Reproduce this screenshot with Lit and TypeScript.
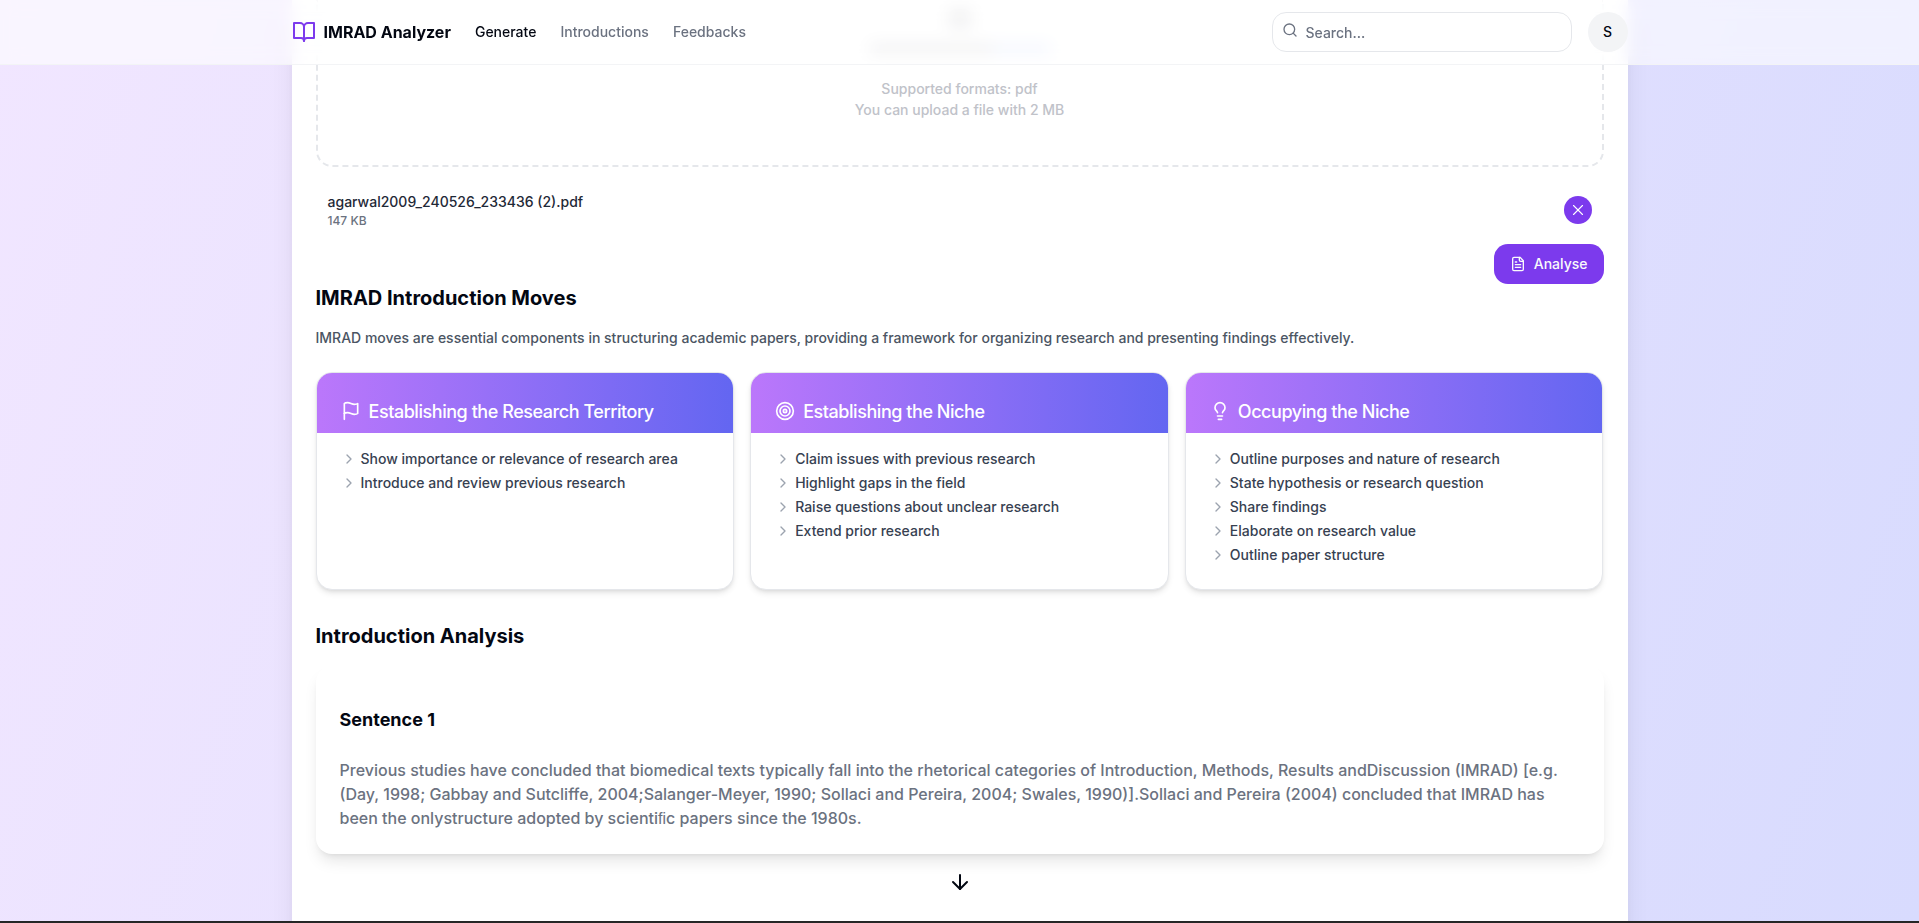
import { LitElement, html, css, svg, nothing } from "lit";
import { customElement, property } from "lit/decorators.js";

const ICONS: Record<string, unknown> = {
  book: svg`<path d="M2 3h6a4 4 0 0 1 4 4v14a3 3 0 0 0-3-3H2z"/><path d="M22 3h-6a4 4 0 0 0-4 4v14a3 3 0 0 1 3-3h7z"/>`,
  search: svg`<circle cx="11" cy="11" r="8"/><path d="m21 21-4.3-4.3"/>`,
  close: svg`<path d="M18 6 6 18"/><path d="m6 6 12 12"/>`,
  file: svg`<path d="M15 2H6a2 2 0 0 0-2 2v16a2 2 0 0 0 2 2h12a2 2 0 0 0 2-2V7Z"/><path d="M14 2v4a2 2 0 0 0 2 2h4"/><path d="M10 9H8"/><path d="M16 13H8"/><path d="M16 17H8"/>`,
  flag: svg`<path d="M4 15s1-1 4-1 5 2 8 2 4-1 4-1V3s-1 1-4 1-5-2-8-2-4 1-4 1z"/><path d="M4 22v-7"/>`,
  target: svg`<circle cx="12" cy="12" r="10"/><circle cx="12" cy="12" r="6"/><circle cx="12" cy="12" r="2"/>`,
  bulb: svg`<path d="M15 14c.2-1 .7-1.7 1.5-2.5 1-.9 1.5-2.2 1.5-3.5A6 6 0 0 0 6 8c0 1 .2 2.2 1.5 3.5.7.7 1.3 1.5 1.5 2.5"/><path d="M9 18h6"/><path d="M10 22h4"/>`,
  chevron: svg`<path d="m9 18 6-6-6-6"/>`,
  down: svg`<path d="M12 5v14"/><path d="m19 12-7 7-7-7"/>`,
};

@customElement("line-icon")
export class LineIcon extends LitElement {
  @property() name = "";

  static styles = css`
    :host { display: block; flex: none; width: 24px; height: 24px; }
    .glyph {
      display: block; width: 100%; height: 100%;
      fill: none; stroke: currentColor; stroke-width: var(--icon-stroke, 2);
      stroke-linecap: round; stroke-linejoin: round;
    }
  `;

  render() {
    return html`<svg class="glyph" viewBox="0 0 24 24" aria-hidden="true">${ICONS[this.name] ?? nothing}</svg>`;
  }
}

@customElement("move-card")
export class MoveCard extends LitElement {
  @property() icon = "";
  @property() heading = "";
  @property({ attribute: false }) items: string[] = [];

  static styles = css`
    :host {
      display: block; overflow: hidden; box-sizing: border-box;
      border: 1px solid #e5e7eb; border-radius: 16px; background: #fff;
      box-shadow: 0 4px 6px -1px rgb(0 0 0 / 0.1), 0 2px 4px -2px rgb(0 0 0 / 0.1);
    }
    .head {
      display: flex; align-items: center; gap: 8px;
      padding: 24px 24px 8px; color: #fff;
      background: linear-gradient(to right, #bb77fb, #6366f1);
    }
    .symbol { width: 20px; height: 20px; }
    .title {
      margin: 0; padding-top: 2px; font-optical-sizing: auto;
      font-size: 18px; line-height: 26px; font-weight: 500; letter-spacing: -0.025em;
    }
    .list { margin: 0; padding: 16px 24px 20px; list-style: none; }
    .item {
      display: flex; align-items: flex-start; gap: 4px;
      padding-bottom: 4px; font-size: 14px; line-height: 20px; color: #374151;
    }
    .arrow { width: 16px; height: 16px; margin-top: 2px; color: #9ca3af; }
  `;

  render() {
    return html`
      <header class="head">
        <line-icon class="symbol" name=${this.icon}></line-icon>
        <h3 class="title">${this.heading}</h3>
      </header>
      <ul class="list">
        ${this.items.map((t) => html`<li class="item"><line-icon class="arrow" name="chevron"></line-icon><span>${t}</span></li>`)}
      </ul>
    `;
  }
}

const MOVES = [
  {
    icon: "flag",
    heading: "Establishing the Research Territory",
    items: ["Show importance or relevance of research area", "Introduce and review previous research"],
  },
  {
    icon: "target",
    heading: "Establishing the Niche",
    items: [
      "Claim issues with previous research",
      "Highlight gaps in the field",
      "Raise questions about unclear research",
      "Extend prior research",
    ],
  },
  {
    icon: "bulb",
    heading: "Occupying the Niche",
    items: [
      "Outline purposes and nature of research",
      "State hypothesis or research question",
      "Share findings",
      "Elaborate on research value",
      "Outline paper structure",
    ],
  },
];

@customElement("app-root")
export class AppRoot extends LitElement {
  static styles = css`
    :host {
      display: flex; flex-direction: column; box-sizing: border-box;
      height: 100vh; overflow: hidden;
      border-bottom: 2px solid #262626;
      background: linear-gradient(108deg, #f1e6ff, #d8dbfe);
      color: #030712;
      font-family: Inter, "Liberation Sans", sans-serif;
      font-size: 14px; line-height: 20px; font-weight: 500;
    }
    .bar {
      position: sticky; top: 0; z-index: 2; flex: none;
      border-bottom: 1px solid #f3f4f6;
      background: rgb(255 255 255 / 0.6);
      backdrop-filter: blur(8px);
    }
    .bar-inner, .sheet { width: 100%; max-width: 1336px; margin: 0 auto; box-sizing: border-box; }
    .bar-inner { display: flex; align-items: center; justify-content: space-between; height: 64px; }
    .nav { display: flex; align-items: center; gap: 24px; }
    .brand { display: flex; align-items: center; gap: 8px; font-size: 16px; font-weight: 700; color: inherit; text-decoration: none; }
    .logo { color: #7c3aed; }
    .link { color: #6b7280; text-decoration: none; }
    .link.current { color: #030712; }
    .tools { display: flex; align-items: center; gap: 16px; }
    .search {
      display: flex; align-items: flex-start; box-sizing: border-box;
      width: 300px; height: 40px; padding: 0 12px 0 9px; gap: 8px;
      border: 1px solid #e5e7eb; border-radius: 14px; background: #fff;
    }
    .search-icon { width: 16px; height: 16px; margin-top: 9px; color: #6b7280; }
    .field {
      flex: 1; min-width: 0; height: 38px; padding: 0; border: 0; outline: 0;
      background: none; font: inherit; color: inherit;
    }
    .field::placeholder { color: #6b7280; opacity: 1; }
    .avatar {
      width: 40px; height: 40px; padding: 0; border: 0; border-radius: 50%;
      background: #f3f4f6; color: inherit; font: inherit;
    }
    .sheet {
      flex: none; margin-top: -65px; padding: 0 24px 24px; background: #fff;
      box-shadow: 0 20px 25px -5px rgb(0 0 0 / 0.1), 0 8px 10px -6px rgb(0 0 0 / 0.1);
    }
    .drop {
      display: flex; flex-direction: column; align-items: center; box-sizing: border-box;
      padding: 9px 24px 45px; border: 2px dashed #e5e7eb; border-top: 0;
      border-radius: 0 0 16px 16px; color: #9ca3af; text-align: center; line-height: 21px;
    }
    .drop-icon { width: 24px; height: 20px; border-radius: 8px; background: #dedee1; }
    .drop-prompt {
      width: 180px; height: 9px; margin: 15px 0 25px;
      background: linear-gradient(to right, #dadadd 68%, #dfe8fd 68%);
    }
    .drop-note { margin: 0; color: #c0c2c9; }
    .file { display: flex; align-items: center; justify-content: space-between; padding: 24px 12px 15px; }
    .file-name { margin: 0; line-height: 22px; color: #1f2937; }
    .file-size { margin: 0; font-size: 12px; line-height: 16px; color: #6b7280; }
    .remove {
      display: grid; place-items: center; width: 28px; height: 28px; padding: 0;
      border: 0; border-radius: 50%; background: #7c3aed; color: #fff;
    }
    .remove-icon { width: 18px; height: 18px; --icon-stroke: 1.5; }
    .run-icon { width: 16px; height: 16px; }
    .actions { display: flex; justify-content: flex-end; }
    .run {
      display: flex; align-items: center; gap: 8px; height: 40px; padding: 0 16px;
      border: 0; border-radius: 14px; background: #7c3aed; color: #f9fafb; font: inherit;
    }
    .heading { margin: 0; font-size: 20px; line-height: 28px; font-weight: 700; }
    .lead { margin: 16px 0 24px; color: #4b5563; }
    .cards { display: grid; grid-template-columns: repeat(3, 1fr); gap: 16px; margin-bottom: 32px; }
    .sentence {
      margin-top: 16px; padding: 40px 24px 24px; border-radius: 16px; background: #fff;
      box-shadow: 0 10px 15px -3px rgb(0 0 0 / 0.1), 0 4px 6px -4px rgb(0 0 0 / 0.1);
    }
    .sentence-title { margin: 0; font-size: 18px; line-height: 28px; font-weight: 700; }
    .sentence-text { margin: 24px 0 0; font-size: 16px; line-height: 24px; color: #6b7280; }
    .next { width: 24px; height: 24px; margin: 16px auto 64px; }
  `;

  render() {
    return html`
      <header class="bar">
        <div class="bar-inner">
          <nav class="nav">
            <a class="brand" href="#"><line-icon class="logo" name="book"></line-icon>IMRAD Analyzer</a>
            <a class="link current" href="#generate">Generate</a>
            <a class="link" href="#introductions">Introductions</a>
            <a class="link" href="#feedbacks">Feedbacks</a>
          </nav>
          <div class="tools">
            <label class="search">
              <line-icon class="search-icon" name="search"></line-icon>
              <input class="field" type="search" placeholder="Search..." aria-label="Search" />
            </label>
            <button class="avatar" type="button">S</button>
          </div>
        </div>
      </header>
      <main class="sheet">
        <section class="drop">
          <div class="drop-icon"></div>
          <div class="drop-prompt"></div>
          <p class="drop-note">Supported formats: pdf</p>
          <p class="drop-note">You can upload a file with 2 MB</p>
        </section>
        <div class="file">
          <div>
            <p class="file-name">agarwal2009_240526_233436 (2).pdf</p>
            <p class="file-size">147 KB</p>
          </div>
          <button class="remove" type="button" aria-label="Remove file"><line-icon class="remove-icon" name="close"></line-icon></button>
        </div>
        <div class="actions">
          <button class="run" type="button"><line-icon class="run-icon" name="file"></line-icon>Analyse</button>
        </div>
        <h2 class="heading">IMRAD Introduction Moves</h2>
        <p class="lead">IMRAD moves are essential components in structuring academic papers, providing a framework for organizing research and presenting findings effectively.</p>
        <div class="cards">
          ${MOVES.map((m) => html`<move-card .icon=${m.icon} .heading=${m.heading} .items=${m.items}></move-card>`)}
        </div>
        <h2 class="heading">Introduction Analysis</h2>
        <article class="sentence">
          <h3 class="sentence-title">Sentence 1</h3>
          <p class="sentence-text">Previous studies have concluded that biomedical texts typically fall into the rhetorical categories of Introduction, Methods, Results andDiscussion (IMRAD) [e.g.(Day, 1998; Gabbay and Sutcliffe, 2004;Salanger-Meyer, 1990; Sollaci and Pereira, 2004; Swales, 1990)].Sollaci and Pereira (2004) concluded that IMRAD has been the onlystructure adopted by scientiﬁc papers since the 1980s.</p>
        </article>
        <line-icon class="next" name="down"></line-icon>
      </main>
    `;
  }
}
